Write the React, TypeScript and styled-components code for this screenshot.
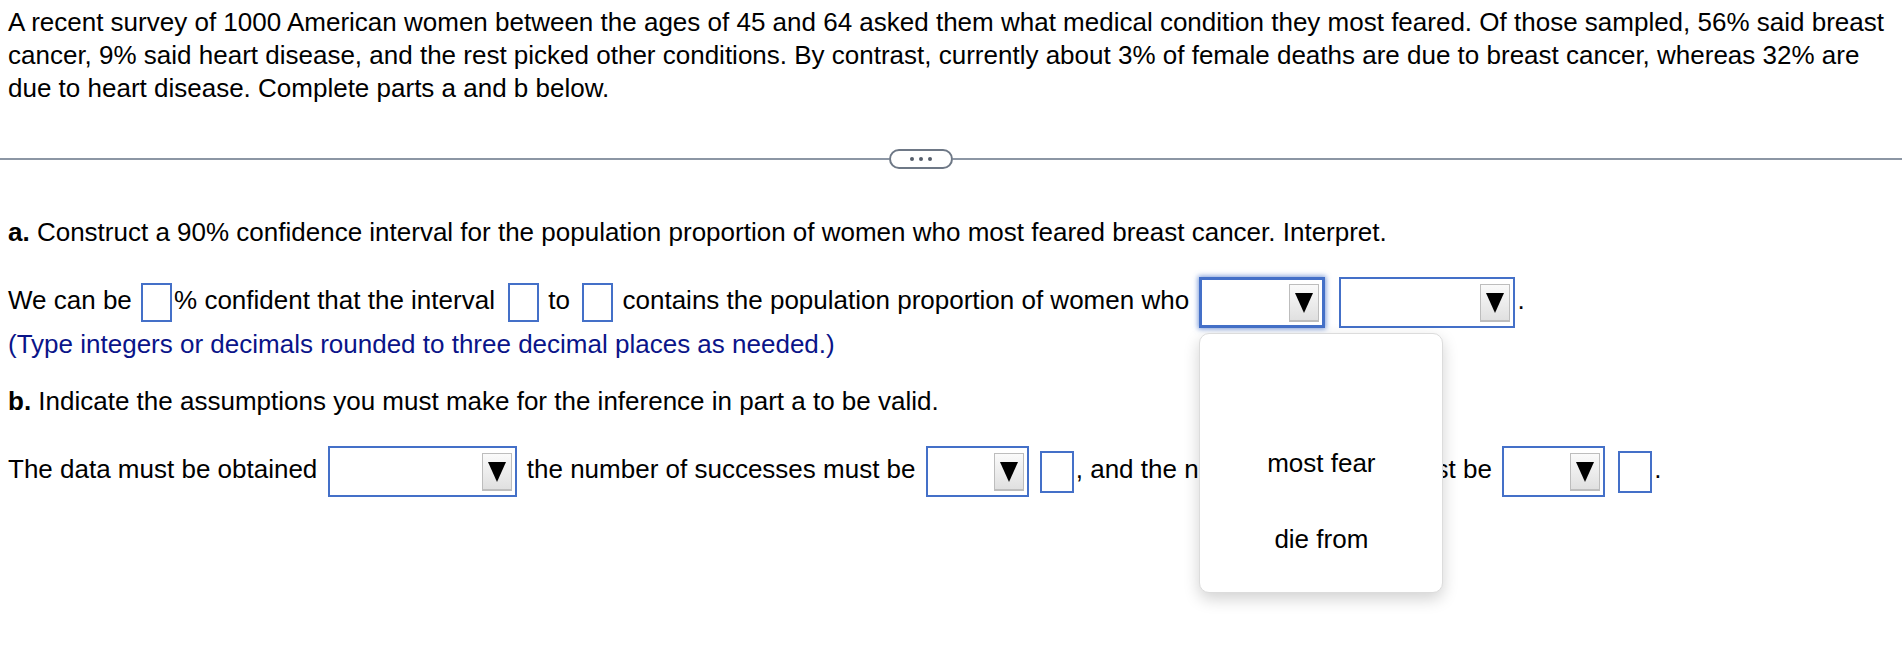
import styled, { createGlobalStyle } from 'styled-components';

const GlobalStyle = createGlobalStyle`
  html, body {
    margin: 0;
    padding: 0;
    background: #fff;
  }
`;

const BLUE = '#4470c8';

const Page = styled.div`
  box-sizing: border-box;
  min-height: 652px;
  padding: 6px 8px 40px;
  font-family: 'Liberation Sans', Arial, Helvetica, sans-serif;
  font-size: 26px;
  color: #000;
`;

const Intro = styled.p`
  margin: 0;
  line-height: 33px;
`;

const Divider = styled.div`
  display: flex;
  align-items: center;
  margin: 44px -8px 0;
`;

const Rule = styled.div<{ $width?: number }>`
  height: 2px;
  background: #8c96a4;
  flex: ${p => (p.$width ? `0 0 ${p.$width}px` : '1')};
`;

const Pill = styled.div`
  width: 64px;
  height: 20px;
  box-sizing: border-box;
  border: 2px solid #6e7886;
  border-radius: 10px;
  display: flex;
  align-items: center;
  justify-content: center;
  gap: 5px;
`;

const Dot = styled.span`
  width: 4px;
  height: 4px;
  border-radius: 50%;
  background: #555e6b;
`;

const Heading = styled.div<{ $top: number }>`
  margin-top: ${p => p.$top}px;
  line-height: 33px;
`;

const Line = styled.div<{ $top?: number }>`
  margin-top: ${p => p.$top ?? 0}px;
  line-height: 33px;
  white-space: nowrap;
`;

const Hint = styled.div`
  line-height: 33px;
  color: #0a1489;
`;

const Box = styled.span<{ $wide?: boolean; $left?: number; $right?: number }>`
  display: inline-block;
  vertical-align: middle;
  box-sizing: border-box;
  width: ${p => (p.$wide ? 34 : 31)}px;
  height: ${p => (p.$wide ? 42 : 39)}px;
  border: 2px solid ${BLUE};
  margin: 0 ${p => p.$right ?? 2}px 0 ${p => p.$left ?? 2}px;
  background: #fff;
`;

const SelectWrap = styled.span`
  position: relative;
  display: inline-block;
  vertical-align: middle;
  margin: 0 3px;
`;

const Select = styled.span<{ $width: number; $focused?: boolean }>`
  display: flex;
  align-items: center;
  justify-content: flex-end;
  box-sizing: border-box;
  width: ${p => p.$width}px;
  height: 51px;
  padding-right: 3px;
  border: ${p => (p.$focused ? 3 : 2)}px solid ${BLUE};
  box-shadow: ${p => (p.$focused ? '0 0 5px 1px rgba(68, 112, 200, 0.7)' : 'none')};
  background: #fff;
`;

const Arrow = styled.span`
  display: flex;
  align-items: center;
  justify-content: center;
  box-sizing: border-box;
  width: 30px;
  height: 38px;
  border: 1px solid #bdbdbd;
  border-bottom-width: 2px;
  background: linear-gradient(#fafafa, #e0e0e0);
`;

const Menu = styled.div`
  position: absolute;
  top: calc(100% + 5px);
  left: 0;
  width: 244px;
  box-sizing: border-box;
  padding: 15px 0;
  background: #fff;
  border: 1px solid #dcdcdc;
  border-radius: 10px;
  box-shadow: 0 6px 16px rgba(0, 0, 0, 0.18);
  z-index: 2;
`;

const Option = styled.div`
  height: 76px;
  display: flex;
  align-items: center;
  justify-content: center;
  line-height: 1;
`;

type DropProps = { width: number; focused?: boolean; options?: string[] };

const Dropdown = ({ width, focused, options }: DropProps) => (
  <SelectWrap>
    <Select $width={width} $focused={focused}>
      <Arrow>
        <svg width="18" height="21" viewBox="0 0 18 21">
          <polygon points="0,1 18,1 9,21" fill="#000" />
        </svg>
      </Arrow>
    </Select>
    {options && (
      <Menu>
        {options.map((o, i) => (
          <Option key={i}>{o}</Option>
        ))}
      </Menu>
    )}
  </SelectWrap>
);

export default function App() {
  return (
    <>
      <GlobalStyle />
      <Page>
        <Intro>
          A recent survey of 1000 American women between the ages of 45 and 64 asked them what
          medical condition they most feared. Of those sampled, 56% said breast cancer, 9% said
          heart disease, and the rest picked other conditions. By contrast, currently about 3% of
          female deaths are due to breast cancer, whereas 32% are due to heart disease. Complete
          parts a and b below.
        </Intro>

        <Divider>
          <Rule $width={889} />
          <Pill>
            <Dot />
            <Dot />
            <Dot />
          </Pill>
          <Rule />
        </Divider>

        <Heading $top={47}>
          <b>a.</b> Construct a 90% confidence interval for the population proportion of women who
          most feared breast cancer. Interpret.
        </Heading>

        <Line $top={28}>
          We can be <Box />% confident that the interval <Box $left={6} /> to <Box $left={5} />{' '}
          contains the population proportion of women who{' '}
          <Dropdown width={126} focused options={['', 'most fear', 'die from']} />{' '}
          <Dropdown width={176} />.
        </Line>
        <Hint>(Type integers or decimals rounded to three decimal places as needed.)</Hint>

        <Heading $top={24}>
          <b>b.</b> Indicate the assumptions you must make for the inference in part a to be valid.
        </Heading>

        <Line $top={28}>
          The data must be obtained <Dropdown width={189} /> the number of successes must be{' '}
          <Dropdown width={103} />
          <Box $wide $left={8} />, and the number of failures must be <Dropdown width={103} />
          <Box $wide $left={10} />.
        </Line>
      </Page>
    </>
  );
}
